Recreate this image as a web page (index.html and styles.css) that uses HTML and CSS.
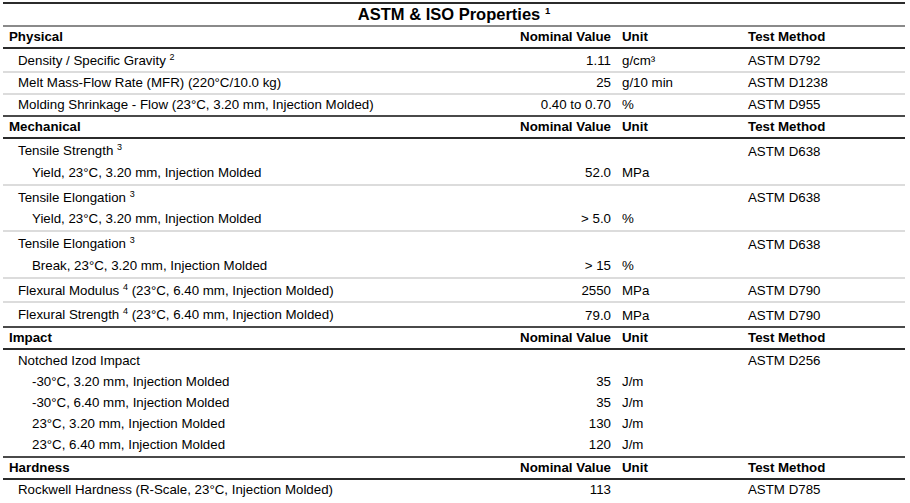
FILE: index.html
```html
<!DOCTYPE html>
<html lang="en">
<head>
<meta charset="utf-8">
<title>ASTM &amp; ISO Properties</title>
<link rel="stylesheet" href="styles.css">
</head>
<body>
<div class="sheet">
  <div class="title">ASTM &amp; ISO Properties <sup class="fn-title">1</sup></div>

  <div class="section">
    <div class="line head"><span class="c-label">Physical</span><span class="c-val">Nominal Value</span><span class="c-unit">Unit</span><span class="c-method">Test Method</span></div>
    <div class="row">
      <div class="line"><span class="c-label">Density / Specific Gravity <sup class="fn">2</sup></span><span class="c-val">1.11</span><span class="c-unit">g/cm³</span><span class="c-method">ASTM D792</span></div>
    </div>
    <div class="row">
      <div class="line"><span class="c-label">Melt Mass-Flow Rate (MFR) (220°C/10.0 kg)</span><span class="c-val">25</span><span class="c-unit">g/10 min</span><span class="c-method">ASTM D1238</span></div>
    </div>
    <div class="row">
      <div class="line"><span class="c-label">Molding Shrinkage - Flow (23°C, 3.20 mm, Injection Molded)</span><span class="c-val">0.40 to 0.70</span><span class="c-unit">%</span><span class="c-method">ASTM D955</span></div>
    </div>
  </div>

  <div class="section">
    <div class="line head"><span class="c-label">Mechanical</span><span class="c-val">Nominal Value</span><span class="c-unit">Unit</span><span class="c-method">Test Method</span></div>
    <div class="row group">
      <div class="line"><span class="c-label">Tensile Strength <sup class="fn">3</sup></span><span class="c-val"></span><span class="c-unit"></span><span class="c-method">ASTM D638</span></div>
      <div class="line sub"><span class="c-label">Yield, 23°C, 3.20 mm, Injection Molded</span><span class="c-val">52.0</span><span class="c-unit">MPa</span><span class="c-method"></span></div>
    </div>
    <div class="row group">
      <div class="line"><span class="c-label">Tensile Elongation <sup class="fn">3</sup></span><span class="c-val"></span><span class="c-unit"></span><span class="c-method">ASTM D638</span></div>
      <div class="line sub"><span class="c-label">Yield, 23°C, 3.20 mm, Injection Molded</span><span class="c-val">&gt; 5.0</span><span class="c-unit">%</span><span class="c-method"></span></div>
    </div>
    <div class="row group">
      <div class="line"><span class="c-label">Tensile Elongation <sup class="fn">3</sup></span><span class="c-val"></span><span class="c-unit"></span><span class="c-method">ASTM D638</span></div>
      <div class="line sub"><span class="c-label">Break, 23°C, 3.20 mm, Injection Molded</span><span class="c-val">&gt; 15</span><span class="c-unit">%</span><span class="c-method"></span></div>
    </div>
    <div class="row">
      <div class="line"><span class="c-label">Flexural Modulus <sup class="fn">4</sup> (23°C, 6.40 mm, Injection Molded)</span><span class="c-val">2550</span><span class="c-unit">MPa</span><span class="c-method">ASTM D790</span></div>
    </div>
    <div class="row">
      <div class="line"><span class="c-label">Flexural Strength <sup class="fn">4</sup> (23°C, 6.40 mm, Injection Molded)</span><span class="c-val">79.0</span><span class="c-unit">MPa</span><span class="c-method">ASTM D790</span></div>
    </div>
  </div>

  <div class="section">
    <div class="line head"><span class="c-label">Impact</span><span class="c-val">Nominal Value</span><span class="c-unit">Unit</span><span class="c-method">Test Method</span></div>
    <div class="row group">
      <div class="line"><span class="c-label">Notched Izod Impact</span><span class="c-val"></span><span class="c-unit"></span><span class="c-method">ASTM D256</span></div>
      <div class="line sub"><span class="c-label">-30°C, 3.20 mm, Injection Molded</span><span class="c-val">35</span><span class="c-unit">J/m</span><span class="c-method"></span></div>
      <div class="line sub"><span class="c-label">-30°C, 6.40 mm, Injection Molded</span><span class="c-val">35</span><span class="c-unit">J/m</span><span class="c-method"></span></div>
      <div class="line sub"><span class="c-label">23°C, 3.20 mm, Injection Molded</span><span class="c-val">130</span><span class="c-unit">J/m</span><span class="c-method"></span></div>
      <div class="line sub"><span class="c-label">23°C, 6.40 mm, Injection Molded</span><span class="c-val">120</span><span class="c-unit">J/m</span><span class="c-method"></span></div>
    </div>
  </div>

  <div class="section">
    <div class="line head"><span class="c-label">Hardness</span><span class="c-val">Nominal Value</span><span class="c-unit">Unit</span><span class="c-method">Test Method</span></div>
    <div class="row">
      <div class="line"><span class="c-label">Rockwell Hardness (R-Scale, 23°C, Injection Molded)</span><span class="c-val">113</span><span class="c-unit"></span><span class="c-method">ASTM D785</span></div>
    </div>
  </div>
</div>
</body>
</html>
```

FILE: styles.css
```css
* {
  box-sizing: border-box;
}

body {
  margin: 0;
  background: #ffffff;
  color: #000000;
  font-family: "Liberation Sans", Arial, sans-serif;
  font-size: 13.3px;
}

.sheet {
  width: 902px;
  margin: 2px 0 0 3px;
  border-top: 2px solid #2b2b2b;
}

.title {
  text-align: center;
  font-weight: bold;
  font-size: 16.5px;
  line-height: 21px;
  border-bottom: 2px solid #8a8a8a;
}

.fn-title {
  font-size: 9.5px;
  line-height: 1;
  vertical-align: super;
}

.line {
  display: grid;
  grid-template-columns: 508px 104px 126px 164px;
  align-items: baseline;
  line-height: 20px;
  white-space: nowrap;
}

.c-label {
  padding-left: 15px;
}

.sub .c-label {
  padding-left: 29px;
}

.c-val {
  text-align: right;
  padding-right: 4px;
}

.c-unit,
.c-method {
  padding-left: 7px;
}

.head {
  font-weight: bold;
  border-bottom: 2px solid #2b2b2b;
}

.head .c-label {
  padding-left: 6px;
}

.section + .section > .head {
  border-top: 2px solid #4a4a4a;
}

.row {
  border-top: 2px solid #dcdcdc;
}

.head + .row {
  border-top: none;
}

.group {
  padding-bottom: 1px;
}

.group .line {
  line-height: 21px;
}

.fn {
  font-size: 9px;
  line-height: 17px;
  vertical-align: super;
}
```
